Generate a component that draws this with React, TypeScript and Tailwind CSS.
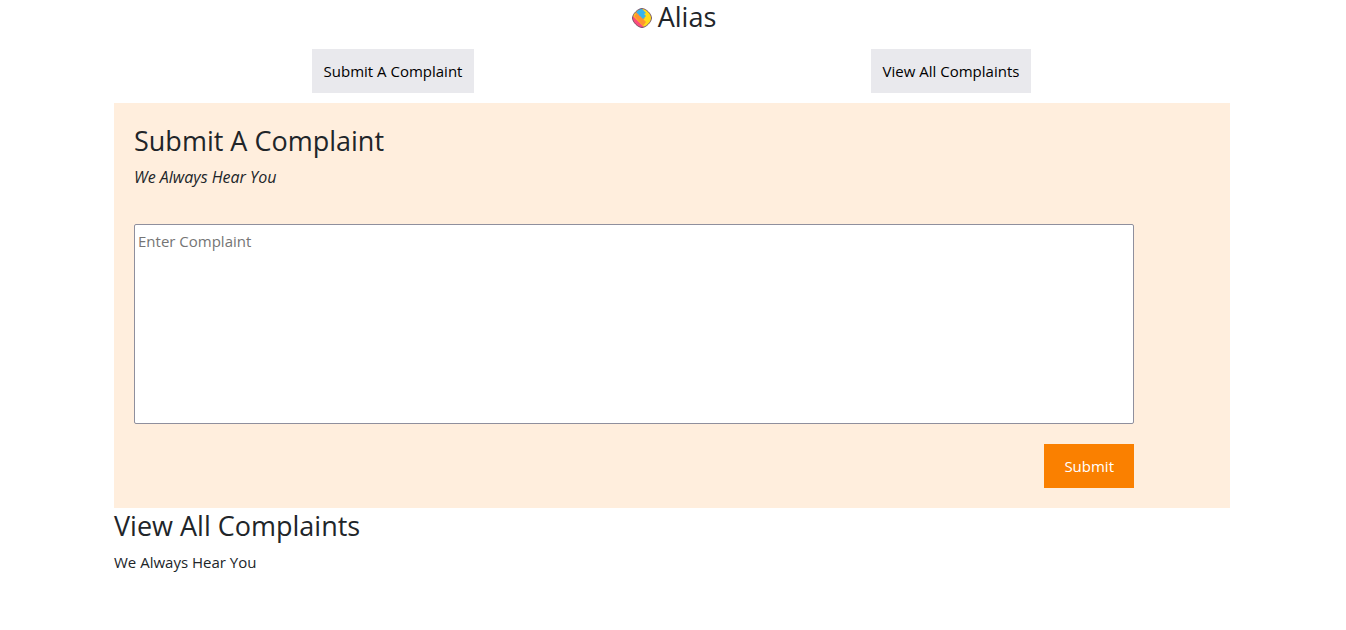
import React from "react";

function Logo() {
  return (
    <svg viewBox="0 0 20 20" className="mt-0.5 h-5 w-5" aria-hidden="true">
      <defs>
        <clipPath id="logo-shape">
          <path d="M10 .5C14 .5 19.500 6 19.500 10S14 19.500 10 19.500.5 14 .5 10 6 .5 10 .5Z" />
        </clipPath>
      </defs>
      <g clipPath="url(#logo-shape)">
        <rect width="20" height="20" fill="#ffdc18" />
        <path d="M0 7 13 20H0Z" fill="#fb4c7c" />
        <path d="M2 8 5 5 14 14 11 18Z" fill="#ff9430" />
        <path d="M3 5 9 0 12 3 9 6 13 10 10 13 5 8Z" fill="#ff9430" />
        <path d="M4 4 9 0 14 5 8 8Z" fill="#35b4ee" />
        <path d="M7 7 10 4 14 8 11 11Z" fill="#35b4ee" />
      </g>
      <path
        d="M10 .5C14 .5 19.500 6 19.500 10S14 19.500 10 19.500.5 14 .5 10 6 .5 10 .5Z"
        fill="none"
        stroke="#6b4a6e"
        strokeWidth=".9"
      />
    </svg>
  );
}

export default function App() {
  return (
    <div className="pr-0.5">
      <main className="mx-auto max-w-[1140px] px-3 font-['Open_Sans','Noto_Sans',sans-serif] text-[15px] leading-6 text-[#212529]">
        <header className="flex items-center justify-center gap-1.5 pb-4 pl-1">
          <Logo />
          <h1 className="text-[27px] leading-[33px]">Alias</h1>
        </header>
        <nav className="grid grid-cols-2 justify-items-center pb-2.5">
          <button type="button" className="bg-[#e9e9ed] px-3 py-2.5 text-black">
            Submit A Complaint
          </button>
          <button type="button" className="bg-[#e9e9ed] px-3 py-2.5 text-black">
            View All Complaints
          </button>
        </nav>
        <section className="bg-[#ffeedd] p-5">
          <h2 className="pb-1.5 text-[27px] leading-9">Submit A Complaint</h2>
          <p className="text-base italic">We Always Hear You</p>
          <form className="flex max-w-[1000px] flex-col items-end gap-5 pt-[35px]" onSubmit={(e) => e.preventDefault()}>
            <textarea
              aria-label="Enter Complaint"
              placeholder="Enter Complaint"
              className="block h-[200px] w-full resize-none rounded-xs border border-[#8f8f9d] bg-white px-[3px] py-1 placeholder:text-[#757575]"
            />
            <button type="submit" className="bg-[#fa8000] px-5 py-2.5 text-white">
              Submit
            </button>
          </form>
        </section>
        <section>
          <h2 className="pb-1.5 text-[27px] leading-9">View All Complaints</h2>
          <p>We Always Hear You</p>
        </section>
      </main>
    </div>
  );
}
